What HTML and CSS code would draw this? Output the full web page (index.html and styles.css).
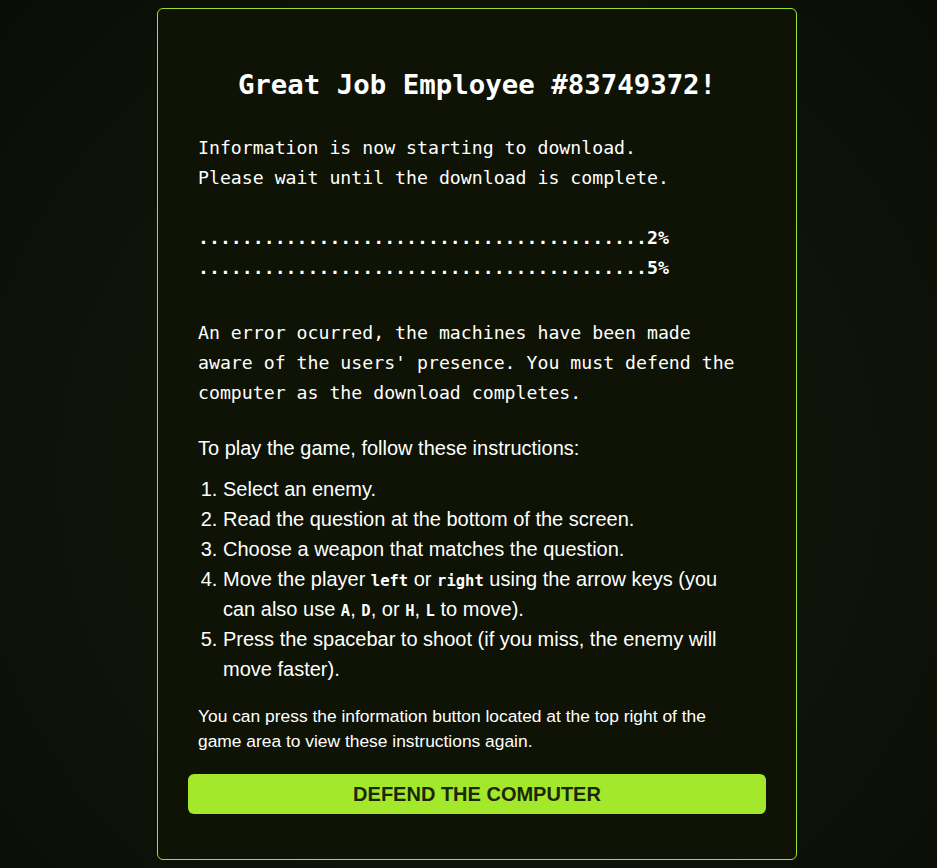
FILE: index.html
```html
<!DOCTYPE html>
<html lang="en">
<head>
<meta charset="utf-8">
<title>Great Job Employee</title>
<link rel="stylesheet" href="styles.css">
</head>
<body>
<main class="card">
  <h1 class="title">Great Job Employee #83749372!</h1>
  <p class="mono">Information is now starting to download.<br>Please wait until the download is complete.</p>
  <p class="mono progress">.........................................2%<br>.........................................5%</p>
  <p class="mono error">An error ocurred, the machines have been made aware of the users' presence. You must defend the computer as the download completes.</p>
  <p class="intro">To play the game, follow these instructions:</p>
  <ol class="steps">
    <li>Select an enemy.</li>
    <li>Read the question at the bottom of the screen.</li>
    <li>Choose a weapon that matches the question.</li>
    <li>Move the player <code>left</code> or <code>right</code> using the arrow keys (you can also use <code>A</code>, <code>D</code>, or <code>H</code>, <code>L</code> to move).</li>
    <li>Press the spacebar to shoot (if you miss, the enemy will move faster).</li>
  </ol>
  <p class="note">You can press the information button located at the top right of the game area to view these instructions again.</p>
  <button class="defend" type="button">DEFEND THE COMPUTER</button>
</main>
</body>
</html>
```
FILE: styles.css
```css
html, body {
  margin: 0;
  padding: 0;
}
body {
  min-height: 868px;
  background: radial-gradient(ellipse at 50% 55%, #151b0d 0%, #10150a 45%, #0a0d06 100%);
  color: #ffffff;
  font-family: "Liberation Sans", Arial, sans-serif;
  padding-top: 8px;
  box-sizing: border-box;
}
.card {
  width: 640px;
  height: 852px;
  box-sizing: border-box;
  margin: 0 auto;
  margin-left: 157px;
  background: #0e1305;
  border: 1px solid #9ee22b;
  border-radius: 6px;
  padding: 58px 40px 0 40px;
  display: flex;
  flex-direction: column;
}
.title {
  margin: 0 0 30px 0;
  text-align: center;
  font-family: "DejaVu Sans Mono", "Liberation Mono", monospace;
  font-weight: bold;
  font-size: 27.4px;
  line-height: 36px;
  letter-spacing: 0;
}
.mono {
  margin: 0;
  font-family: "DejaVu Sans Mono", "Liberation Mono", monospace;
  font-size: 18.2px;
  line-height: 30px;
  max-width: 545px;
}
.progress {
  margin-top: 30px;
  font-weight: bold;
}
.error {
  margin-top: 35px;
}
.intro {
  margin: 25px 0 0 0;
  font-size: 20px;
  line-height: 30px;
}
.steps {
  margin: 11px 20px 0 0;
  padding-left: 25px;
  font-size: 20px;
  line-height: 30px;
}
.steps code {
  font-family: "DejaVu Sans Mono", "Liberation Mono", monospace;
  font-weight: bold;
  font-size: 15.5px;
  line-height: 1;
}
.note {
  margin: 20px 20px 0 0;
  font-size: 17.4px;
  line-height: 25px;
}
.defend {
  margin: 20px -10px 0 -10px;
  height: 40px;
  border: none;
  border-radius: 6px;
  background: #a3e82a;
  color: #1c2708;
  font-family: "Liberation Sans", Arial, sans-serif;
  font-weight: bold;
  font-size: 20px;
  padding: 0;
  cursor: pointer;
}
```
